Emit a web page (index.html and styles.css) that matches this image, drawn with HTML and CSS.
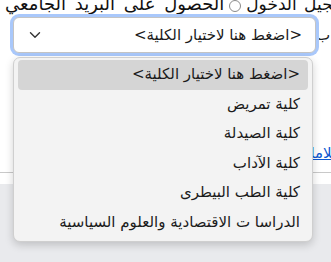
FILE: index.html
```html
<!DOCTYPE html>
<html lang="ar" dir="rtl">
<head>
<meta charset="utf-8">
<link rel="stylesheet" href="styles.css">
</head>
<body>
<div class="page">
  <div class="top">
    <span class="opt">تسجيل الدخول</span>
    <span class="radio"></span>
    <span class="opt wide">الحصول على البريد الجامعي</span>
  </div>
  <div class="field">
    <span class="label">ب</span>
    <div class="select">
      <span class="value">&lt;اضغط هنا لاختيار الكلية&gt;</span>
      <svg class="chev" width="12" height="8" viewBox="0 0 12 8"><path d="M1.5 1.8 L6 6.2 L10.5 1.8" fill="none" stroke="#333" stroke-width="1.4" stroke-linecap="round" stroke-linejoin="round"/></svg>
    </div>
  </div>
  <div class="linkrow"><a class="link" href="#">علامات</a></div>
  <div class="rule"></div>
  <div class="band"></div>
</div>
<div class="menu">
  <div class="item sel">&lt;اضغط هنا لاختيار الكلية&gt;</div>
  <div class="item">كلية تمريض</div>
  <div class="item">كلية الصيدلة</div>
  <div class="item">كلية الآداب</div>
  <div class="item">كلية الطب البيطرى</div>
  <div class="item">الدراسا ت الاقتصادية والعلوم السياسية</div>
</div>
</body>
</html>
```
FILE: styles.css
```css
html, body {
  margin: 0;
  padding: 0;
  width: 331px;
  height: 262px;
  overflow: hidden;
  background: #ffffff;
  font-family: "Segoe UI", "DejaVu Sans", sans-serif;
  color: #1b1b1b;
}
.page {
  display: flex;
  flex-direction: column;
  height: 262px;
}
.top {
  height: 20px;
  margin-top: -6px;
  display: flex;
  align-items: center;
  gap: 5px;
  margin-right: -22px;
  font-size: 17px;
  line-height: 20px;
  white-space: nowrap;
  color: #111;
  word-spacing: 2px;
}
.wide {
  font-size: 18px;
  word-spacing: 3px;
}
.radio {
  width: 12px;
  height: 12px;
  border: 1px solid #8a8a8a;
  border-radius: 50%;
  box-sizing: border-box;
  flex: none;
  margin-top: 4px;
}
.field {
  margin-top: 3px;
  display: flex;
  align-items: center;
  height: 36px;
}
.label {
  width: 15px;
  flex: none;
  font-size: 15px;
  text-align: left;
  overflow: hidden;
}
.select {
  width: 303px;
  height: 36px;
  box-sizing: border-box;
  border: 1px solid #c4c4c4;
  border-radius: 6px;
  box-shadow: 0 0 0 3px #a9c8fb;
  background: #fff;
  display: flex;
  align-items: center;
  justify-content: space-between;
  padding: 0 13px 0 15px;
  font-size: 15px;
}
.chev { flex: none; }
.linkrow {
  margin-top: 91px;
  height: 18px;
  display: flex;
  font-size: 15px;
  line-height: 18px;
  margin-right: -10px;
}
.link {
  color: #0b57d0;
  text-decoration: underline;
}
.rule {
  margin-top: 10px;
  height: 1px;
  background: #c9c9c9;
}
.band {
  margin-top: 11px;
  flex: 1;
  background: #e9eaed;
}
.menu {
  position: absolute;
  left: 13px;
  top: 57px;
  width: 300px;
  box-sizing: border-box;
  padding: 2px 4px 4px;
  background: #f3f3f3;
  border: 1px solid #cfcfcf;
  border-radius: 7px;
  box-shadow: 0 3px 8px rgba(0,0,0,0.18);
  display: flex;
  flex-direction: column;
  font-size: 15px;
}
.item {
  height: 29.5px;
  line-height: 29.5px;
  padding: 0 8px;
  white-space: nowrap;
  border-radius: 4px;
  color: #1b1b1b;
}
.item.sel {
  background: #d5d5d5;
}
```
